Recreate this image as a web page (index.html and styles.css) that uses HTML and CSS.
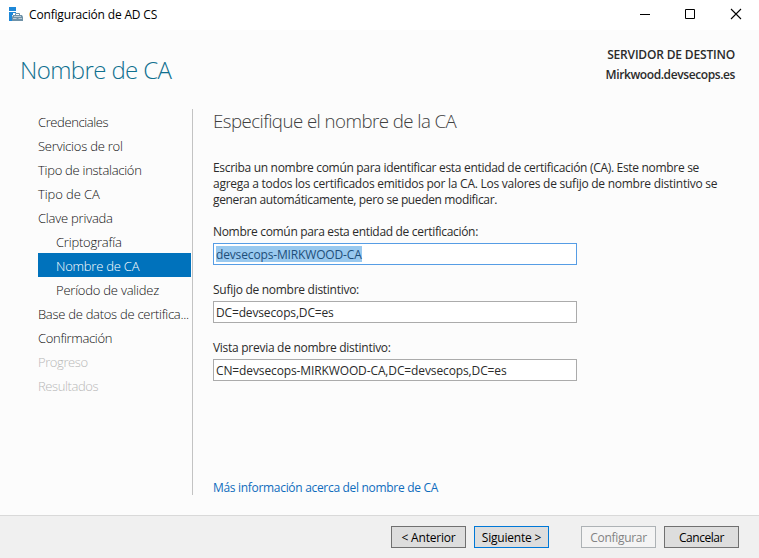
FILE: index.html
```html
<!DOCTYPE html>
<html lang="es">
<head>
<meta charset="utf-8">
<title>Configuración de AD CS</title>
<link rel="stylesheet" href="styles.css">
</head>
<body>
<div class="window">
  <header class="titlebar">
    <svg class="app-icon" width="16" height="16" viewBox="0 0 16 16">
      <path fill="#1e88d8" d="M1 0h7v4H1zM1 5h7v1H5v2H4v6H1z"/>
      <path d="M7.500 8.500V6.500h4v2" fill="none" stroke="#6f92a8"/>
      <path fill="#6f92a8" d="M5 8h9l1 2v4H4v-4z"/>
      <path fill="#d5e0e7" d="M6 9h7v.800H6zM5 11h3.500v.800H5zM10.500 11H14v.800h-3.500z"/>
    </svg>
    <span class="caption">Configuración de AD CS</span>
    <div class="controls">
      <svg width="46" height="30" viewBox="0 0 46 30"><path d="M19 14.500h10" stroke="#000" fill="none"/></svg>
      <svg width="46" height="30" viewBox="0 0 46 30"><path d="M18.500 9.500h9v9h-9z" stroke="#000" fill="none"/></svg>
      <svg width="46" height="30" viewBox="0 0 46 30"><path d="M18 9l10 10M28 9l-10 10" stroke="#000" stroke-width="1.100" fill="none"/></svg>
    </div>
  </header>
  <section class="heading">
    <h1>Nombre de CA</h1>
    <div class="target">
      <div class="t1">SERVIDOR DE DESTINO</div>
      <div class="t2">Mirkwood.devsecops.es</div>
    </div>
  </section>
  <main class="main">
    <nav class="steps">
      <div class="step n1">Credenciales</div>
      <div class="step n2">Servicios de rol</div>
      <div class="step n3">Tipo de instalación</div>
      <div class="step n4">Tipo de CA</div>
      <div class="step n5">Clave privada</div>
      <div class="step sub n6">Criptografía</div>
      <div class="step sub current n7">Nombre de CA</div>
      <div class="step sub n8">Período de validez</div>
      <div class="step n9">Base de datos de certifica...</div>
      <div class="step n10">Confirmación</div>
      <div class="step disabled n11">Progreso</div>
      <div class="step disabled n12">Resultados</div>
    </nav>
    <section class="content">
      <h2>Especifique el nombre de la CA</h2>
      <p class="intro">
        <span class="p1">Escriba un nombre común para identificar esta entidad de certificación (CA). Este nombre se</span>
        <span class="p2">agrega a todos los certificados emitidos por la CA. Los valores de sufijo de nombre distintivo se</span>
        <span class="p3">generan automáticamente, pero se pueden modificar.</span>
      </p>
      <div class="field">
        <div class="label l1">Nombre común para esta entidad de certificación:</div>
        <div class="box focused"><span class="v1 selected">devsecops-MIRKWOOD-CA</span></div>
      </div>
      <div class="field">
        <div class="label l2">Sufijo de nombre distintivo:</div>
        <div class="box"><span class="v2">DC=devsecops,DC=es</span></div>
      </div>
      <div class="field">
        <div class="label l3">Vista previa de nombre distintivo:</div>
        <div class="box"><span class="v3">CN=devsecops-MIRKWOOD-CA,DC=devsecops,DC=es</span></div>
      </div>
      <a class="more">Más información acerca del nombre de CA</a>
    </section>
  </main>
  <footer class="footer">
    <button class="b1">&lt; Anterior</button>
    <button class="default b2">Siguiente &gt;</button>
    <button class="gap b3" disabled>Configurar</button>
    <button class="b4">Cancelar</button>
  </footer>
</div>
</body>
</html>
```
FILE: styles.css
```css
* { box-sizing: border-box; }
body { margin: 0; font: 12px/16px "Open Sans", "Noto Sans", sans-serif; color: #2b2b2b; font-variant-ligatures: none; }
.window { width: 759px; height: 558px; display: flex; flex-direction: column; background: #fcfcfc; overflow: hidden; white-space: nowrap; }
.titlebar { height: 30px; background: #fff; display: flex; align-items: center; padding-left: 8px; flex: none; color: #000; }
.app-icon { margin-right: 5px; }
.caption { letter-spacing: -.17px; }
.controls { display: flex; margin-left: auto; }
.controls svg { display: block; }
.heading { height: 79px; flex: none; display: flex; justify-content: space-between; padding: 0 24px 0 20px; }
h1 { margin: 23px 0 0; font-size: 24px; line-height: 34px; font-weight: 300; color: #10708f; letter-spacing: -.6px; }
.target { padding-top: 15px; text-align: right; font-weight: 600; line-height: 20px; }
.t1 { letter-spacing: -.17px; }
.t2 { letter-spacing: -.4px; }
.main { flex: 1; display: flex; padding-left: 38px; }
.steps { width: 155px; height: 386px; padding-right: 1px; border-right: 1px solid #c3c3c3; }
.step { height: 24px; line-height: 26px; font-size: 13px; font-weight: 300; color: #111; letter-spacing: -.22px; }
.n1, .n11, .n12 { letter-spacing: -.4px; }
.n3, .n9 { letter-spacing: -.28px; }
.n4 { letter-spacing: -.08px; }
.n10 { letter-spacing: -.33px; }
.sub { padding-left: 18px; }
.step.current { background: #0072bc; color: #fff; }
.step.disabled { color: #b8b8b8; }
.content { padding-left: 20px; }
h2 { margin: 0; font-size: 18.700px; font-weight: 300; line-height: 23px; height: 25px; color: #404040; letter-spacing: -.56px; }
.intro { margin: 26px 0 16px; }
.intro span { display: block; }
.p1 { letter-spacing: -.31px; }
.p2 { letter-spacing: -.257px; }
.p3 { letter-spacing: -.36px; }
.field { height: 58px; }
.label { height: 19px; line-height: 16px; letter-spacing: -.28px; }
.l1 { letter-spacing: -.32px; }
.box { width: 364px; height: 22px; border: 1px solid #ababab; background: #fff; padding: 2px; }
.box span { display: inline-block; line-height: 17px; height: 16px; vertical-align: top; letter-spacing: -.12px; }
.box .v1, .box .v2 { letter-spacing: -.15px; }
.box.focused { border-color: #569de5; }
.selected { background: #99c9ef; color: #1d4e79; }
.more { display: block; margin-top: 82px; color: #0f6cbd; letter-spacing: -.31px; }
.footer { height: 43px; flex: none; background: #f0f0f0; border-top: 1px solid #d9d9d9; display: flex; padding: 10px 0 0 391px; gap: 8px; }
button { width: 75px; height: 22px; padding: 2px 0 0; border: 1px solid #707070; background: #ddd; font: inherit; color: #000; line-height: 18px; letter-spacing: -.2px; }
.default { border-color: #0078d7; }
.gap { margin-left: 24px; }
.b3 { letter-spacing: -.3px; }
.b4 { letter-spacing: -.45px; }
button:disabled { background: #f4f4f4; border-color: #adb2b5; color: #838383; }
```
